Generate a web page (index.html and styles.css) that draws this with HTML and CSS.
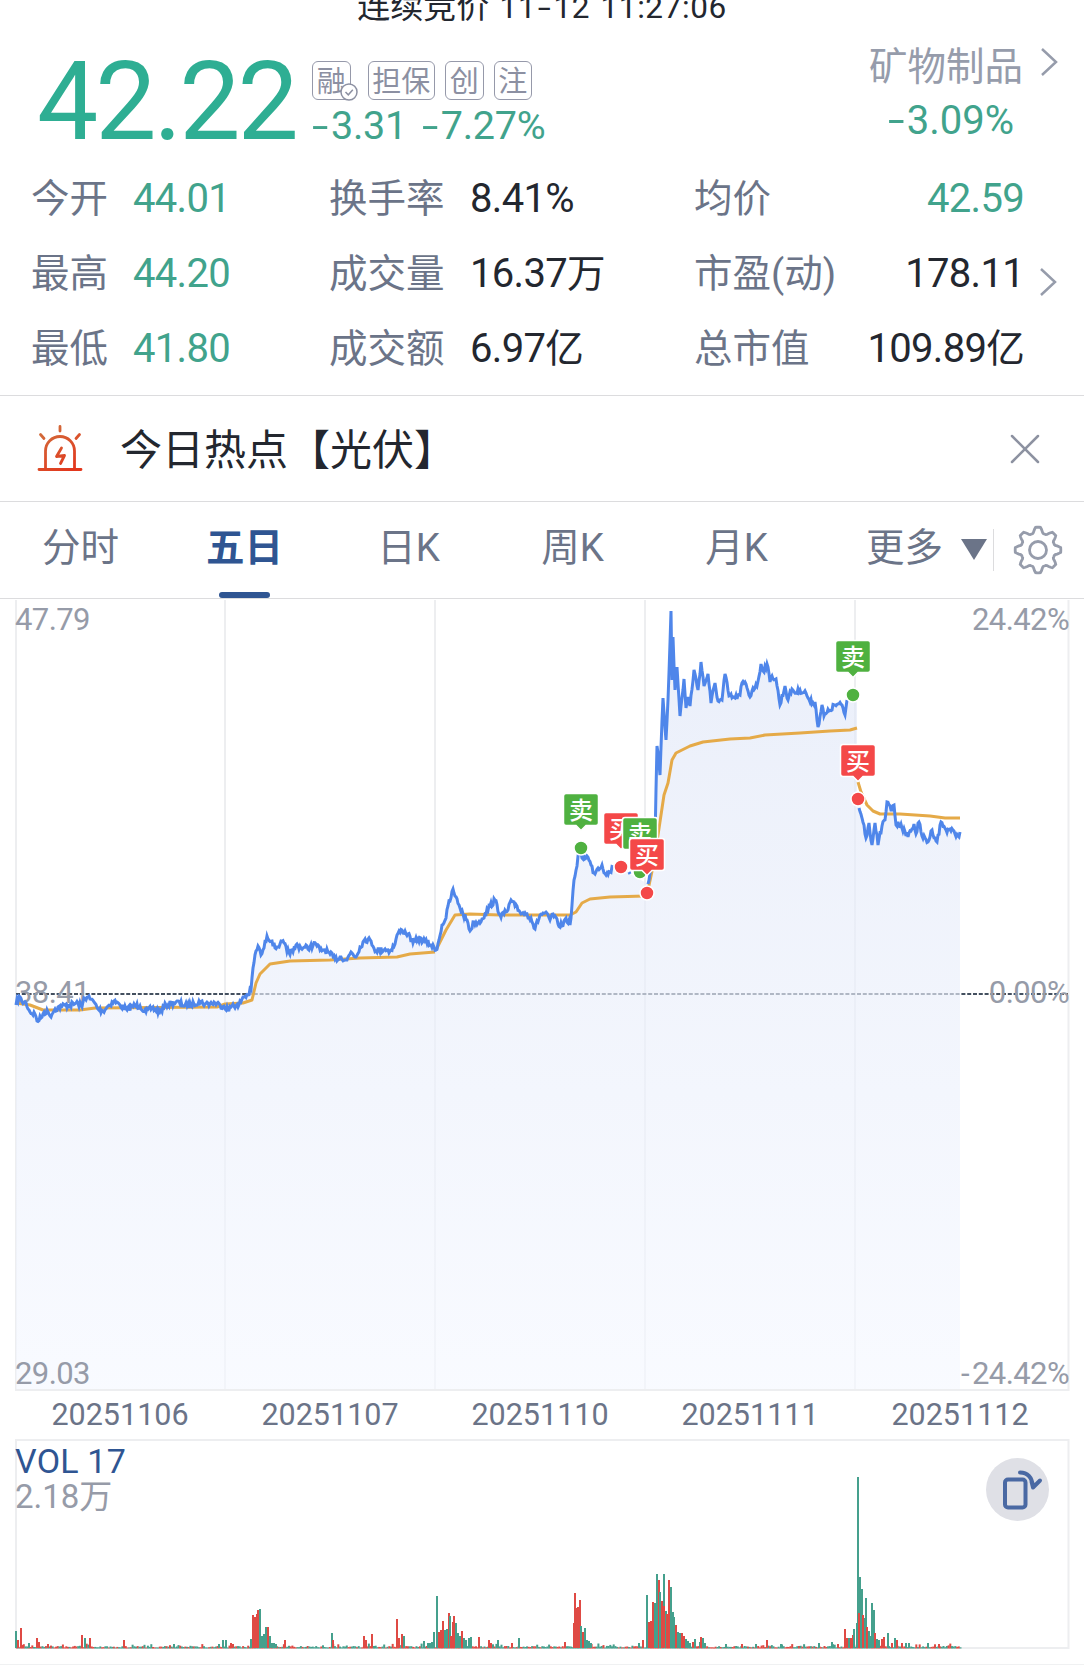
FILE: index.html
```html
<!DOCTYPE html>
<html lang="zh-CN">
<head>
  <meta charset="UTF-8">
  <meta name="viewport" content="width=device-width, initial-scale=1.0">
  <title>五日走势</title>
  <link rel="stylesheet" href="styles.css">
</head>
<body>
  <div class="status"><span>连续竞价</span> 11<b>-</b>12 11:27:06</div>

  <header class="summary">
    <div class="price">42.22</div>
    <div class="detail">
      <div class="badges">
        <span class="badge">融
          <svg class="badge-check" width="18" height="18" viewBox="0 0 18 18"><circle cx="9" cy="9" r="8"/><path d="M5.5 9l2.8 2.8 4.500-5"/></svg>
        </span>
        <span class="badge">担保</span>
        <span class="badge">创</span>
        <span class="badge">注</span>
      </div>
      <div class="change"><span><b>-</b>3.31</span><span><b>-</b>7.27%</span></div>
    </div>
    <div class="sector">
      <div class="sector-name">矿物制品
        <svg class="chevron" width="18" height="30" viewBox="0 0 18 30"><path d="M2 2l14 13L2 28"/></svg>
      </div>
      <div class="sector-change"><b>-</b>3.09%</div>
    </div>
  </header>

  <div class="stats">
    <span class="label first">今开</span><span class="down">44.01</span>
    <span class="label">换手率</span><span>8.41%</span>
    <span class="label">均价</span><span class="right down">42.59</span>
    <span class="label first">最高</span><span class="down">44.20</span>
    <span class="label">成交量</span><span>16.37<i>万</i></span>
    <span class="label">市盈(动)</span><span class="right">178.11</span>
    <span class="label first">最低</span><span class="down">41.80</span>
    <span class="label">成交额</span><span>6.97<i>亿</i></span>
    <span class="label">总市值</span><span class="right">109.89<i>亿</i></span>
    <svg class="chevron more" width="18" height="30" viewBox="0 0 18 30"><path d="M2 2l14 13L2 28"/></svg>
  </div>

  <div class="hot">
    <svg class="alarm" width="48" height="48" viewBox="0 0 48 48">
      <defs>
        <linearGradient id="alarm-color" gradientUnits="userSpaceOnUse" x1="0" y1="0" x2="30" y2="48">
          <stop offset="0" stop-color="#cf7640"/>
          <stop offset="1" stop-color="#e2371d"/>
        </linearGradient>
      </defs>
      <path d="M3 44.500h42M9.500 44V26a14.500 14.500 0 0 1 29 0V44M24 1.500v4.500M4.500 9.500l3.500 4M43.500 9.500l-3.500 4M25.500 23l-5 8.500 8-1-4 8"/>
    </svg>
    <span class="hot-text">今日热点【光伏】</span>
    <svg class="close" width="30" height="30" viewBox="0 0 30 30"><path d="M2 2l26 26M28 2L2 28"/></svg>
  </div>

  <nav class="tabs">
    <span class="tab">分时</span>
    <span class="tab active">五日</span>
    <span class="tab">日K</span>
    <span class="tab">周K</span>
    <span class="tab">月K</span>
    <span class="tab-more">更多<svg width="26" height="21" viewBox="0 0 26 21"><path d="M0 0h26L13 21z"/></svg></span>
    <svg class="gear" id="gear" width="52" height="52" viewBox="-26 -26 52 52"><circle r="8.500"/></svg>
  </nav>

  <svg class="price-chart" width="1084" height="793" viewBox="0 599 1084 793">
    <defs>
      <linearGradient id="area-fill" gradientUnits="userSpaceOnUse" x1="0" y1="610" x2="0" y2="1390">
        <stop offset="0" stop-color="#dfe6f7"/>
        <stop offset="1" stop-color="#f5f8ff"/>
      </linearGradient>
    </defs>
    <path class="grid" d="M16 600V1390H1068.500V600M225 600V1390M435 600V1390M645 600V1390M855 600V1390"/>
    <path class="zero" d="M16 994H1068"/>
    <path class="area" id="area"/>
    <g class="axis">
      <text x="15" y="630">47.79</text>
      <text x="15" y="1003">38.41</text>
      <text x="15" y="1384">29.03</text>
      <text x="1069" y="630" text-anchor="end">24.42%</text>
      <text x="1069" y="1003" text-anchor="end">0.00%</text>
      <text x="1069" y="1384" text-anchor="end"><tspan>-</tspan><tspan dx="3">24.42%</tspan></text>
    </g>
    <path class="avg-line" id="avg"/>
    <path class="price-line" id="line"/>
    <g id="markers"></g>
  </svg>

  <div class="dates">
    <span>20251106</span><span>20251107</span><span>20251110</span><span>20251111</span><span>20251112</span>
  </div>

  <div class="volume">
    <svg class="volume-chart" width="1084" height="212" viewBox="0 1439 1084 212">
      <path class="grid" d="M16 1648V1440H1068.500V1648z"/>
      <text class="vol" x="15" y="1473">VOL 17</text>
      <text class="vol-max" x="15" y="1508">2.18万</text>
      <g id="bars"></g>
    </svg>
    <button class="rotate">
      <svg width="64" height="64" viewBox="0 0 64 64"><rect x="20" y="21.500" width="20.500" height="28" rx="3"/><path d="M35 14.500c8 0 12 5 13 14M46.500 23.500l1.500 6 7-7"/></svg>
    </button>
  </div>

  <script>
    // [x, y] points, one array per unbroken stretch
    const prices = [
      [[16,1005],[19,996],[22,1002],[26,1003],[30,1012],[35,1014],[37,1021],[41,1018],[44,1012],[48,1012],[50,1016],[55,1009],[62,1006],[70,1005],[78,1003],[82,1007],[84,998],[88,997],[90,999],[94,1002],[98,1009],[103,1011],[108,1006],[114,1001],[120,1005],[127,1010],[132,1006],[140,1006],[146,1012],[152,1008],[160,1012],[166,1005],[176,1002],[187,1006],[194,1004],[199,1001],[205,1004],[215,1003],[220,1005],[224,1006],[229,1010],[233,1004],[238,1007],[243,997],[248,995],[251,990],[253,968],[256,951],[258,946],[261,955],[264,948],[267,936],[272,941],[275,948],[280,944],[284,943],[287,952],[293,952],[296,945],[303,948],[310,947],[316,944],[320,950],[325,950],[330,954],[335,959],[341,957],[347,960],[351,952],[356,957],[360,947],[365,939],[371,941],[376,951],[385,949],[390,951],[395,944],[397,935],[402,930],[408,934],[413,943],[418,939],[425,941],[431,945],[436,950],
       [439,940],[442,925],[446,918],[448,906],[450,901],[453,889],[455,896],[459,905],[463,914],[467,920],[470,931],[474,922],[478,923],[482,919],[485,914],[490,906],[495,900],[500,915],[504,914],[508,910],[511,900],[515,906],[520,912],[527,914],[531,918],[535,929],[540,915],[545,913],[550,920],[553,914],[558,924],[562,926],[566,918],[570,925],[572,905],[574,880],[577,866],[580,845],[582,858],[587,856],[591,865],[594,873],[598,868],[602,865],[606,875],[610,872],[613,867]],
      [[629,872],[630,874]],
      [[648,884],[655,842],[656,790],[657,746],[660,775],[663,698],[666,740],[668,700],[671,611],[672,680],[673,637],[675,690],[677,667],[680,716],[684,679],[686,708],[688,697],[690,706],[694,670],[698,690],[701,662],[704,686],[708,674],[711,703],[715,683],[718,701],[722,700],[725,674],[729,696],[735,698],[740,695],[742,683],[746,684],[750,697],[753,688],[757,686],[761,664],[763,671],[767,664],[770,682],[772,676],[776,679],[780,705],[785,686],[788,700],[792,689],[796,693],[800,690],[806,693],[810,702],[815,702],[818,727],[822,705],[824,716],[829,711],[835,705],[842,705],[845,715],[847,700]],
      [[859,808],[862,818],[864,825],[866,838],[869,823],[872,845],[875,823],[878,845],[882,826],[885,820],[887,802],[891,810],[894,805],[896,825],[901,824],[906,836],[911,831],[914,824],[916,834],[919,822],[922,836],[928,842],[932,830],[937,842],[941,822],[946,830],[950,829],[955,834],[958,836],[960,832]]
    ];
    const averages = [
      [[16,1003],[30,1005],[43,1010],[80,1010],[95,1008],[217,1007],[225,1004],[243,1003],[252,1000],[256,983],[260,974],[270,964],[290,961],[330,960],[360,958],[397,957],[410,954],[435,952]],
      [[436,950],[440,942],[446,930],[455,915],[470,914],[500,915],[570,915],[576,912],[582,903],[590,899],[610,897],[645,896]],
      [[648,890],[654,862],[658,835],[664,795],[668,783],[672,760],[676,753],[690,746],[703,742],[730,739],[750,738],[765,735],[800,733],[830,731],[850,730],[857,728]],
      [[858,782],[861,792],[867,805],[873,811],[880,814],[900,814],[930,816],[945,818],[960,818]]
    ];
    const markers = [
      [581, 848, "卖", 794], [621, 867, "买", 813], [640, 872, "卖", 818],
      [647, 893, "买", 839], [853, 695, "卖", 641], [858, 799, "买", 745]
    ];
    // x, height, g = falling / r = rising
    const spikes = "15,17,g 17,8,r 20,20,r 28,5,g 36,10,r 38,6,r 47,4,r 81,13,r 84,10,g 89,10,r 123,8,r 173,4,g 218,4,g 222,8,g 225,8,g 230,5,r 232,4,r 250,9,g 252,33,r 254,31,r 256,34,r 257,38,r 259,39,g 261,12,g 263,14,g 265,21,g 267,21,r 269,12,g 271,5,g 273,5,g 275,4,g 284,8,r 331,15,g 332,8,r 363,12,r 365,8,r 371,14,r 396,29,r 398,10,r 401,14,r 403,12,g 423,7,g 427,5,g 429,5,g 431,6,g 433,16,g 436,52,g 438,16,r 440,18,r 442,27,r 444,18,g 446,19,g 448,35,r 449,32,g 450,12,r 452,26,r 453,32,r 455,25,g 457,15,g 459,12,g 461,17,r 463,10,g 465,8,g 468,10,g 470,11,g 478,11,r 488,8,r 490,5,r 497,8,g 511,5,r 518,10,g 564,6,r 573,25,r 574,55,r 576,40,r 577,41,r 579,48,r 580,22,g 582,16,r 584,20,g 586,8,g 588,7,g 590,5,g 638,5,g 642,8,r 646,53,g 648,26,r 650,27,r 652,46,r 654,45,g 656,74,g 658,68,r 659,56,g 661,47,r 663,74,g 663,42,r 665,37,g 661,43,r 668,68,r 670,61,g 666,34,r 672,36,g 673,31,g 675,23,r 677,16,g 679,15,g 681,15,r 683,12,r 685,9,g 687,7,g 689,5,g 692,6,r 694,9,g 699,6,g 700,11,r 702,10,g 704,5,g 725,4,g 741,4,r 755,4,g 766,8,r 780,4,g 818,5,g 831,6,g 837,4,r 844,19,r 846,10,r 848,10,g 850,10,r 852,13,r 853,19,g 856,25,g 857,171,g 859,71,g 860,50,g 861,59,g 858,35,r 862,32,g 865,50,g 862,33,r 864,30,g 866,21,r 868,17,g 871,45,g 873,38,g 874,15,r 870,12,g 876,9,g 878,8,g 881,9,r 883,11,r 887,15,g 891,5,r 894,10,g 896,8,r 901,5,r 905,5,g 908,5,g 927,5,g 938,4,r"
      .split(" ").map(s => s.split(","));

    let seed = 7;
    function random() {
      seed = (seed * 16807) % 2147483647;
      return seed / 2147483647;
    }

    function toPath(points) {
      return "M" + points.map(p => p.join(" ")).join("L");
    }

    // adds the minute by minute wobble between two points
    function wobble(points) {
      const out = [points[0]];
      for (let i = 1; i < points.length; i++) {
        const [x0, y0] = points[i - 1];
        const [x1, y1] = points[i];
        for (let x = x0 + 1; x < x1; x++) {
          const y = y0 + (y1 - y0) * (x - x0) / (x1 - x0);
          out.push([x, (y + (random() - 0.5) * 6).toFixed(1)]);
        }
        out.push(points[i]);
      }
      return out;
    }

    const lines = prices.map((part, i) => i === 1 ? part : wobble(part));
    document.getElementById("line").setAttribute("d", lines.map(toPath).join(""));
    document.getElementById("avg").setAttribute("d", averages.map(toPath).join(""));

    const outline = lines.slice(0, 3).flat().concat([[853, 695], [857, 695], [857, 799]], lines[3]);
    document.getElementById("area").setAttribute("d", toPath(outline) + "V1389H16z");

    document.getElementById("markers").innerHTML = markers.map(([x, y, text]) =>
      `<circle class="${text === "卖" ? "sell" : "buy"}" cx="${x}" cy="${y}" r="7"/>`
    ).join("") + markers.map(([x, y, text, top]) =>
      `<g class="${text === "卖" ? "sell" : "buy"}">
        <path d="M${x - 15} ${top - 0.5}h30q2.500 0 2.500 2.500v27q0 2.500 -2.500 2.500h-10l-5 5l-5 -5h-10q-2.500 0 -2.500 -2.500v-27q0 -2.500 2.500 -2.500z"/>
        <text x="${x}" y="${top + 24.5}">${text}</text>
      </g>`
    ).join("");

    let bars = "";
    for (let x = 16; x < 960; x += 1.7) {
      const h = random() < 0.2 ? random() * 4 : random() * 1.5;
      bars += `<rect class="${random() < 0.5 ? "rise" : "fall"}" x="${x.toFixed(1)}" y="${(1647.5 - h).toFixed(1)}" width="2" height="${(h + 1).toFixed(1)}"/>`;
    }
    spikes.forEach(([x, h, type]) => {
      bars += `<rect class="${type === "r" ? "rise" : "fall"}" x="${x}" y="${1648 - h}" width="2" height="${h}"/>`;
    });
    document.getElementById("bars").innerHTML = bars;

    // gear rim with eight rounded teeth
    let rim = "";
    for (let a = 0; a < 360; a += 3) {
      const wave = Math.max(-1, Math.min(1, 1.5 * Math.cos(a * 8 * Math.PI / 180)));
      const r = 20 + 2.8 * wave;
      rim += (a ? "L" : "M") + (r * Math.sin(a * Math.PI / 180)).toFixed(2) + " " + (-r * Math.cos(a * Math.PI / 180)).toFixed(2);
    }
    document.getElementById("gear").innerHTML += `<path d="${rim}z"/>`;
  </script>
</body>
</html>
```
FILE: styles.css
```css
body {
  margin: 0;
  width: 1084px;
  height: 1672px;
  overflow: hidden;
  background: #fff;
  color: #23272f;
  font-family: Roboto, "Noto Sans CJK SC", sans-serif;
}

svg {
  display: block;
  fill: none;
}

b, i {
  font-weight: inherit;
  font-style: normal;
}

.status {
  height: 61px;
  line-height: 13px;
  font-size: 31.500px;
  letter-spacing: 0.6px;
  word-spacing: 2px;
  text-align: center;
  white-space: pre;
}

.status span {
  font-size: 33px;
  letter-spacing: 0;
}

.status b {
  display: inline-block;
  margin: 0 4px;
  transform: scaleX(1.5);
}

/* Price and sector */
.summary {
  display: flex;
  height: 100px;
  padding: 0 26px 0 37px;
}

.price {
  width: 275px;
  line-height: 82px;
  font-size: 109px;
  letter-spacing: -3px;
  color: #2eae93;
}

.badges {
  display: flex;
  gap: 10px;
  height: 39px;
}

.badge {
  position: relative;
  box-sizing: border-box;
  height: 39px;
  padding: 2px 3.750px 0;
  border: 1.500px solid #9699aa;
  border-radius: 6px;
  line-height: 36px;
  font-size: 29px;
  color: #8c90a2;
}

.badge:first-child {
  margin-right: 7px;
}

.badge-check {
  position: absolute;
  right: -8px;
  bottom: -2px;
  stroke: #8c90a2;
  stroke-width: 1.500;
}

.badge-check circle {
  fill: #fff;
}

.change {
  display: flex;
  gap: 17px;
  margin-top: 6px;
  padding-left: 2px;
  line-height: 40px;
  font-size: 39.500px;
  letter-spacing: -0.3px;
}

.change, .sector-change, .down {
  color: #41a38c;
}

.change b, .sector-change b {
  display: inline-block;
  width: 17px;
  text-align: left;
  transform: scaleX(1.5);
  transform-origin: 4px 50%;
}

.sector {
  margin-left: auto;
  margin-top: -13px;
}

.sector-name {
  display: flex;
  gap: 17px;
  line-height: 38px;
  font-size: 38.500px;
  color: #969cab;
}

.sector-name .chevron {
  margin-top: -1px;
}

.chevron {
  stroke: #969cab;
  stroke-width: 2.500;
}

.sector-change {
  margin-right: 44px;
  margin-top: 15px;
  line-height: 40px;
  font-size: 40px;
  text-align: right;
}

/* Quote numbers */
.stats {
  display: grid;
  grid-template-columns: 102px 196px 141px 224px 160px 170px 33px;
  grid-auto-rows: 75px;
  height: 234px;
  padding-left: 31px;
  border-bottom: 1px solid #dcdcde;
  line-height: 75px;
  font-size: 40px;
  letter-spacing: -0.7px;
  white-space: nowrap;
}

.stats .label {
  font-size: 38.500px;
  letter-spacing: 0;
  color: #6b7488;
}

.stats .first {
  grid-column: 1;
}

.stats i {
  font-size: 38.500px;
}

.right {
  text-align: right;
}

.more {
  grid-column: 7;
  grid-row: 2;
  justify-self: end;
  margin-top: 31px;
}

/* Hot topic */
.hot {
  display: flex;
  align-items: center;
  height: 105px;
  padding: 0 44px 0 36px;
  border-bottom: 1px solid #dcdcde;
}

.alarm {
  stroke: url(#alarm-color);
  stroke-width: 2.800;
  stroke-linecap: round;
  stroke-linejoin: round;
}

.hot-text {
  flex: 1;
  padding: 4px 0 0 36px;
  font-size: 42px;
  line-height: 60px;
}

.close {
  stroke: #8d92a1;
  stroke-width: 2.500;
  stroke-linecap: round;
}

/* Period tabs */
.tabs {
  display: flex;
  height: 96px;
  border-bottom: 1px solid #dcdcde;
  line-height: 92px;
  font-size: 38.500px;
  color: #6b7488;
}

.tab {
  position: relative;
  box-sizing: border-box;
  width: 164px;
  padding-right: 3px;
  text-align: center;
}

.tab.active {
  font-weight: 700;
  color: #2f5592;
}

.tab.active::after {
  content: "";
  position: absolute;
  left: 55px;
  bottom: 0;
  width: 51px;
  height: 6px;
  border-radius: 3px;
  background: #2f5592;
}

.tab-more {
  display: flex;
  gap: 18px;
  width: 127px;
  padding-left: 46px;
}

.tab-more svg {
  margin-top: 37px;
  fill: #6b7488;
}

.gear {
  margin-top: 22px;
  padding-left: 19px;
  height: 52px;
  stroke: #969cab;
  stroke-width: 2.800;
  background: linear-gradient(#dcdcde, #dcdcde) 0 5px / 1px 42px no-repeat;
}

/* Charts */
.grid {
  stroke: #edeef0;
  stroke-width: 2;
}

.zero {
  stroke: #44505f;
  stroke-width: 1.800;
  stroke-dasharray: 4 1.800;
}

.area {
  fill: url(#area-fill);
  opacity: 0.65;
}

.axis text {
  font-size: 31px;
  letter-spacing: -0.6px;
  fill: #969ba8;
}

.avg-line {
  stroke: #e5aa48;
  stroke-width: 3;
  stroke-linejoin: round;
}

.price-line {
  stroke: #4f86ea;
  stroke-width: 3;
}

.sell, .buy {
  stroke: #fff;
  stroke-width: 1.500;
}

.sell {
  fill: #4fb140;
}

.buy {
  fill: #f44848;
}

.sell text, .buy text {
  fill: #fff;
  stroke: none;
  font-size: 24px;
  font-weight: 500;
  text-anchor: middle;
}

.dates {
  display: grid;
  grid-template-columns: repeat(5, 210px);
  height: 47px;
  padding-left: 15px;
  line-height: 45px;
  font-size: 30.500px;
  text-align: center;
  color: #6b7488;
}

.volume {
  position: relative;
  height: 225px;
  border-bottom: 1px solid #f0f1f2;
}

.vol {
  font-size: 34px;
  letter-spacing: 0.2px;
  fill: #2f5592;
}

.vol-max {
  font-size: 33px;
  fill: #969ba8;
}

.rise {
  fill: #df4a44;
}

.fall {
  fill: #45a08d;
}

.rotate {
  position: absolute;
  left: 986px;
  top: 19px;
  width: 63px;
  height: 63px;
  padding: 0;
  border: none;
  border-radius: 50%;
  background: #dfe0e6;
}

.rotate svg {
  margin-left: -1px;
  stroke: #4a69a3;
  stroke-width: 4;
  stroke-linecap: round;
  stroke-linejoin: round;
}
```
